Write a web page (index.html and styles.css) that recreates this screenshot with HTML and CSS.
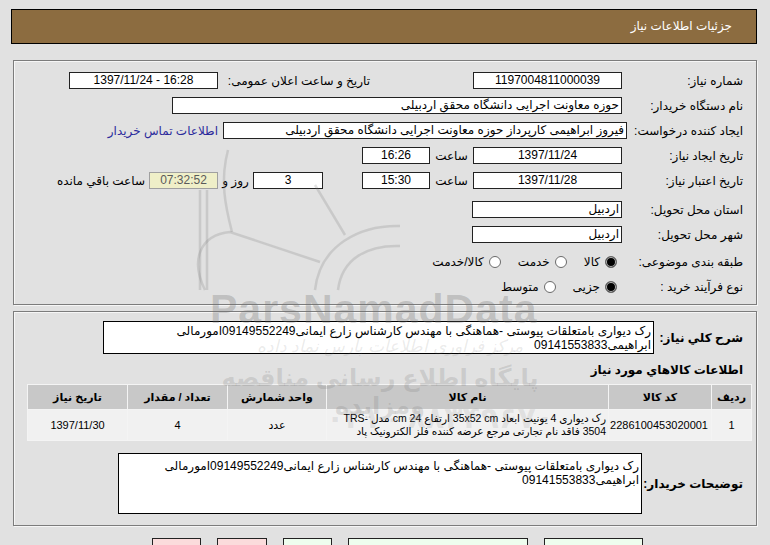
FILE: index.html
```html
<!DOCTYPE html>
<html lang="fa" dir="rtl">
<head>
<meta charset="utf-8">
<title>جزئیات اطلاعات نیاز</title>
<link rel="stylesheet" href="styles.css">
</head>
<body>
<div class="page">
  <div class="titlebar">جزئیات اطلاعات نیاز</div>

  <div class="panel p1">
    <div class="row">
      <div class="lbl">شماره نیاز:</div>
      <div class="box c w149">1197004811000039</div>
      <div class="lbl-ann">تاریخ و ساعت اعلان عمومی:</div>
      <div class="box c w149 ltr">1397/11/24 - 16:28</div>
    </div>
    <div class="row">
      <div class="lbl">نام دستگاه خریدار:</div>
      <div class="box w450">حوزه معاونت اجرایی دانشگاه محقق اردبیلی</div>
    </div>
    <div class="row">
      <div class="lbl lbl-narrow">ایجاد کننده درخواست:</div>
      <div class="box w404">فیروز ابراهیمی کارپرداز حوزه معاونت اجرایی دانشگاه محقق اردبیلی</div>
      <a class="link" href="#">اطلاعات تماس خریدار</a>
    </div>
    <div class="row">
      <div class="lbl">تاریخ ایجاد نیاز:</div>
      <div class="box c w149">1397/11/24</div>
      <div class="mid">ساعت</div>
      <div class="box c w68">16:26</div>
    </div>
    <div class="row">
      <div class="lbl">تاریخ اعتبار نیاز:</div>
      <div class="box c w149">1397/11/28</div>
      <div class="mid">ساعت</div>
      <div class="box c w68">15:30</div>
      <div class="box c w70 gap39">3</div>
      <div class="mid w35">روز و</div>
      <div class="box c w69 remain">07:32:52</div>
      <div class="remain-lbl">ساعت باقي مانده</div>
    </div>
    <div class="row row-gap">
      <div class="lbl">استان محل تحویل:</div>
      <div class="box w150">اردبیل</div>
    </div>
    <div class="row">
      <div class="lbl">شهر محل تحویل:</div>
      <div class="box w150">اردبیل</div>
    </div>
    <div class="row row-gap2">
      <div class="lbl">طبقه بندی موضوعی:</div>
      <div class="opts">
        <span class="opt"><span class="radio on"></span>کالا</span>
        <span class="opt"><span class="radio"></span>خدمت</span>
        <span class="opt"><span class="radio"></span>کالا/خدمت</span>
      </div>
    </div>
    <div class="row">
      <div class="lbl">نوع فرآیند خرید :</div>
      <div class="opts">
        <span class="opt"><span class="radio on"></span>جزیی</span>
        <span class="opt opt-tight"><span class="radio"></span>متوسط</span>
      </div>
    </div>
  </div>

  <div class="panel p2">
    <div class="desc-row">
      <div class="blbl w89">شرح کلي نیاز:</div>
      <div class="tbox desc">رک دیواری بامتعلقات پیوستی -هماهنگی با مهندس کارشناس زارع ایمانی09149552249امورمالی ابراهیمی09141553833</div>
    </div>
    <div class="heading">اطلاعات کالاهاي مورد نیاز</div>
    <table class="items">
      <colgroup>
        <col class="col1"><col class="col2"><col class="col3"><col class="col4"><col class="col5"><col class="col6">
      </colgroup>
      <thead>
        <tr>
          <th>ردیف</th>
          <th>کد کالا</th>
          <th>نام کالا</th>
          <th>واحد شمارش</th>
          <th>تعداد / مقدار</th>
          <th>تاریخ نیاز</th>
        </tr>
      </thead>
      <tbody>
        <tr>
          <td>1</td>
          <td>2286100453020001</td>
          <td class="name">رک دیواری 4 یونیت ابعاد 35x52 cm ارتفاع 24 cm مدل TRS-3504 فاقد نام تجارتی مرجع عرضه کننده فلز الکترونیک پاد</td>
          <td>عدد</td>
          <td>4</td>
          <td>1397/11/30</td>
        </tr>
      </tbody>
    </table>
    <div class="notes-row">
      <div class="blbl w101">توضیحات خریدار:</div>
      <div class="tbox notes">رک دیواری بامتعلقات پیوستی -هماهنگی با مهندس کارشناس زارع ایمانی09149552249امورمالی ابراهیمی09141553833</div>
    </div>
  </div>

  <div class="buttons">
    <span class="btn green b99"></span>
    <span class="btn green b180"></span>
    <span class="btn green b49"></span>
    <span class="btn pink b50"></span>
    <span class="btn pink b49"></span>
  </div>
</div>

<div class="watermark" aria-hidden="true">
  <svg class="wm-logo" width="770" height="545" viewBox="0 0 770 545">
    <g fill="none" stroke="rgba(120,120,120,0.22)" stroke-width="2.5">
      <path d="M205 290 C190 260 200 235 230 232 L320 262"/>
      <path d="M315 290 C320 245 360 225 400 226"/>
      <path d="M338 290 C342 258 368 245 400 246"/>
      <path d="M232 232 C225 205 220 180 228 150"/>
      <path d="M200 290 L200 190"/>
      <path d="M207 290 L207 190"/>
      <path d="M345 235 L315 185"/>
    </g>
  </svg>
  <div class="wm-en">ParsNamadData</div>
  <div class="wm-fa1">مرکز فراوری اطلاعات پارس نماد داده</div>
  <div class="wm-fa2">پایگاه اطلاع رسانی مناقصه ومزایده</div>
  <div class="wm-fa3">۰۲۱ - ۸۸۳۴۹۶۷۰</div>
</div>
</body>
</html>
```

FILE: styles.css
```css
html, body {
  margin: 0;
  padding: 0;
}
body {
  background: #e1e1e1;
  font-family: "Liberation Sans", "DejaVu Sans", sans-serif;
  font-size: 12px;
  color: #000;
  direction: rtl;
  position: relative;
  overflow: hidden;
  height: 545px;
}
.page {
  padding: 9px 13px 0 11px;
}
.titlebar {
  height: 33px;
  line-height: 33px;
  background: #8c6c40;
  border: 1px solid #000;
  color: #fff;
  padding-right: 24px;
  font-size: 12px;
}
.panel {
  margin-left: 2px;
  border: 1px solid #7c7c7c;
  box-shadow: 1px 1px 0 #f6f6f6, inset 1px 1px 0 #f6f6f6;
}
.p1 {
  margin-top: 16px;
  padding: 7px 13px 5px 0;
  height: 231px;
}
.row {
  display: flex;
  align-items: center;
  height: 25px;
  white-space: nowrap;
}
.row-gap { margin-top: 4px; }
.row-gap2 { margin-top: 2px; }
.lbl {
  width: 121px;
  flex: none;
}
.lbl-narrow { width: 116px; }
.box {
  box-sizing: border-box;
  height: 17px;
  line-height: 15px;
  border: 1px solid #222;
  background: #fff;
  padding: 0 2px;
  flex: none;
  overflow: hidden;
  white-space: nowrap;
}
.box.c { text-align: center; }
.ltr { direction: ltr; }
.w149 { width: 149px; }
.w150 { width: 150px; }
.w450 { width: 450px; }
.w404 { width: 404px; }
.w68 { width: 68px; }
.w70 { width: 70px; }
.w69 { width: 69px; }
.lbl-ann {
  width: 152px;
  margin-right: 103px;
  flex: none;
}
.link {
  margin-right: 5px;
  color: #2b2b9c;
  text-decoration: none;
}
.mid {
  width: 43px;
  text-align: center;
  flex: none;
}
.mid.w35 { width: 35px; }
.gap39 { margin-right: 39px; }
.remain {
  background: #efefc8;
  border-color: #a0a0a0;
  color: #5a5a5a;
}
.remain-lbl {
  margin-right: 4px;
}
.opts {
  display: flex;
  align-items: center;
  margin-right: 5px;
}
.opt {
  display: inline-flex;
  align-items: center;
  margin-left: 17px;
}
.opt-tight { margin-left: 0; }
.radio {
  box-sizing: border-box;
  width: 12px;
  height: 12px;
  border-radius: 50%;
  border: 1px solid #6a6a6a;
  background: #fff;
  margin-left: 5px;
  flex: none;
}
.radio.on {
  background: #000;
  box-shadow: inset 0 0 0 1px #bbb;
}

.p2 {
  margin-top: 6px;
  height: 204px;
  padding: 9px 0 0 0;
}
.desc-row, .notes-row {
  display: flex;
  align-items: center;
}
.blbl {
  flex: none;
  font-weight: bold;
  font-size: 12px;
  padding-right: 13px;
  white-space: nowrap;
}
.w89 { width: 89px; }
.w101 { width: 101px; }
.tbox {
  box-sizing: border-box;
  background: #fff;
  border: 1px solid #000;
  padding: 2px 2px;
  line-height: 14px;
  text-align: right;
}
.desc {
  width: 551px;
  height: 33px;
}
.heading {
  font-weight: bold;
  font-size: 12px;
  height: 20px;
  line-height: 20px;
  margin-top: 6px;
  padding-right: 13px;
}
.items {
  margin: 4px 4px 0 0;
  width: 724px;
  border-collapse: collapse;
  table-layout: fixed;
  font-size: 11px;
}
.items th, .items td {
  box-sizing: border-box;
  border: 1px solid #f4f4f4;
  text-align: center;
  padding: 0 3px;
}
.items th {
  background: #c8c8c8;
  height: 25px;
  font-weight: bold;
}
.items td {
  background: #f1f1f1;
  height: 31px;
  line-height: 13px;
}
.items td.name {
  text-align: right;
  font-size: 10.5px;
  padding: 0 2px 0 1px;
}
.col1 { width: 40px; }
.col2 { width: 103px; }
.col3 { width: 282px; }
.col4 { width: 99px; }
.col5 { width: 100px; }
.col6 { width: 100px; }
.notes-row {
  margin-top: 12px;
}
.notes {
  width: 524px;
  height: 61px;
  padding-top: 5px;
}

.buttons {
  display: flex;
  gap: 16px;
  margin-top: 12px;
  padding-right: 114px;
}
.btn {
  box-sizing: border-box;
  height: 24px;
  border: 1px solid #222;
}
.green { background: #eefdee; }
.pink { background: #fbdcdc; }
.b99 { width: 99px; }
.b180 { width: 180px; }
.b49 { width: 49px; }
.b50 { width: 50px; }

.watermark {
  position: absolute;
  left: 0;
  top: 0;
  width: 770px;
  height: 545px;
  pointer-events: none;
  color: rgba(110, 110, 110, 0.2);
}
.wm-logo {
  position: absolute;
  left: 0;
  top: 0;
}
.wm-en {
  position: absolute;
  left: 210px;
  top: 286px;
  font-family: "Liberation Sans", sans-serif;
  font-weight: bold;
  font-size: 41px;
  letter-spacing: 1px;
  direction: ltr;
  color: rgba(110, 110, 110, 0.3);
}
.wm-fa1 {
  position: absolute;
  left: 230px;
  top: 336px;
  width: 320px;
  text-align: center;
  font-size: 17px;
  font-style: italic;
  color: rgba(110, 110, 110, 0.14);
}
.wm-fa2 {
  position: absolute;
  left: 195px;
  top: 364px;
  width: 370px;
  text-align: center;
  font-size: 24px;
  font-weight: bold;
  color: rgba(110, 110, 110, 0.2);
}
.wm-fa3 {
  position: absolute;
  left: 320px;
  top: 400px;
  width: 240px;
  text-align: center;
  font-size: 30px;
  font-weight: bold;
  direction: ltr;
  color: rgba(110, 110, 110, 0.12);
}
```
